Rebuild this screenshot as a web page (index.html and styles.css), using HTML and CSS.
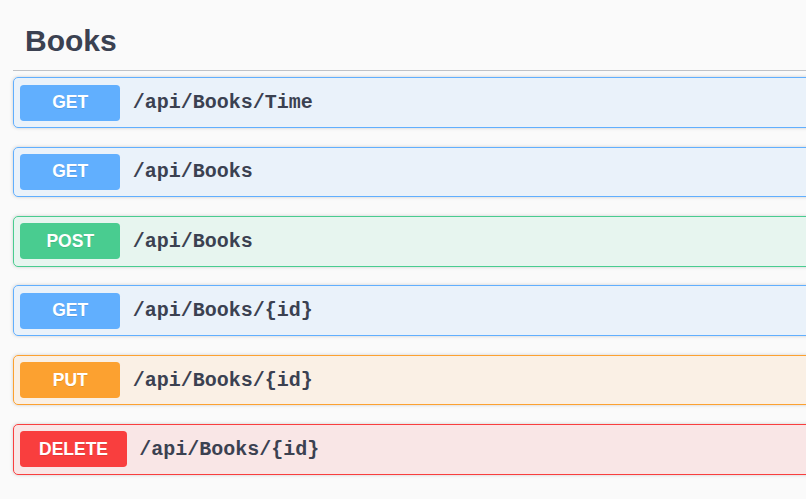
FILE: index.html
```html
<!DOCTYPE html>
<html lang="en">
<head>
<meta charset="utf-8">
<title>Books</title>
<link rel="stylesheet" href="styles.css">
</head>
<body>
<div class="wrapper">
  <section class="tag-section">
    <h4 class="opblock-tag">Books</h4>
    <div class="opblock opblock-get">
      <div class="summary"><span class="method">GET</span><span class="path">/api/Books/Time</span></div>
    </div>
    <div class="opblock opblock-get">
      <div class="summary"><span class="method">GET</span><span class="path">/api/Books</span></div>
    </div>
    <div class="opblock opblock-post">
      <div class="summary"><span class="method">POST</span><span class="path">/api/Books</span></div>
    </div>
    <div class="opblock opblock-get">
      <div class="summary"><span class="method">GET</span><span class="path">/api/Books/{id}</span></div>
    </div>
    <div class="opblock opblock-put">
      <div class="summary"><span class="method">PUT</span><span class="path">/api/Books/{id}</span></div>
    </div>
    <div class="opblock opblock-delete">
      <div class="summary"><span class="method">DELETE</span><span class="path">/api/Books/{id}</span></div>
    </div>
  </section>
</div>
</body>
</html>
```
FILE: styles.css
```css
html, body {
  margin: 0;
  padding: 0;
  background: #fafafa;
}

.wrapper {
  padding: 15.5px 0 0 13px;
  height: 483.5px;
  overflow: hidden;
}

.tag-section {
  margin-right: -8px;
}

.opblock-tag {
  margin: 0 0 6.25px;
  padding: 10px 25px 14.5px 12px;
  border-bottom: 1px solid rgba(59, 65, 81, 0.3);
  font-family: "Liberation Sans", Arial, sans-serif;
  font-size: 30px;
  line-height: 30px;
  font-weight: 700;
  color: #3b4151;
}

.opblock {
  margin: 0 0 18.9px;
  border: 1px solid #000;
  border-radius: 5px;
  box-shadow: 0 0 3.75px rgba(0, 0, 0, 0.19);
}

.summary {
  display: flex;
  align-items: center;
  padding: 6.25px;
}

.method {
  box-sizing: border-box;
  min-width: 100px;
  height: 36px;
  padding: 0 18.75px;
  display: flex;
  align-items: center;
  justify-content: center;
  border-radius: 3.75px;
  font-family: "Liberation Sans", Arial, sans-serif;
  font-size: 17.5px;
  font-weight: 700;
  color: #fff;
  text-shadow: 0 1px 0 rgba(0, 0, 0, 0.1);
}

.path {
  padding: 0 12.5px;
  font-family: "Liberation Mono", "Courier New", monospace;
  font-size: 20px;
  font-weight: 700;
  color: #3b4151;
}

.opblock-get { background: rgba(97, 175, 254, 0.1); border-color: #61affe; }
.opblock-get .method { background: #61affe; }

.opblock-post { background: rgba(73, 204, 144, 0.1); border-color: #49cc90; }
.opblock-post .method { background: #49cc90; }

.opblock-put { background: rgba(252, 161, 48, 0.1); border-color: #fca130; }
.opblock-put .method { background: #fca130; }

.opblock-delete { background: rgba(249, 62, 62, 0.1); border-color: #f93e3e; }
.opblock-delete .method { background: #f93e3e; }
```
